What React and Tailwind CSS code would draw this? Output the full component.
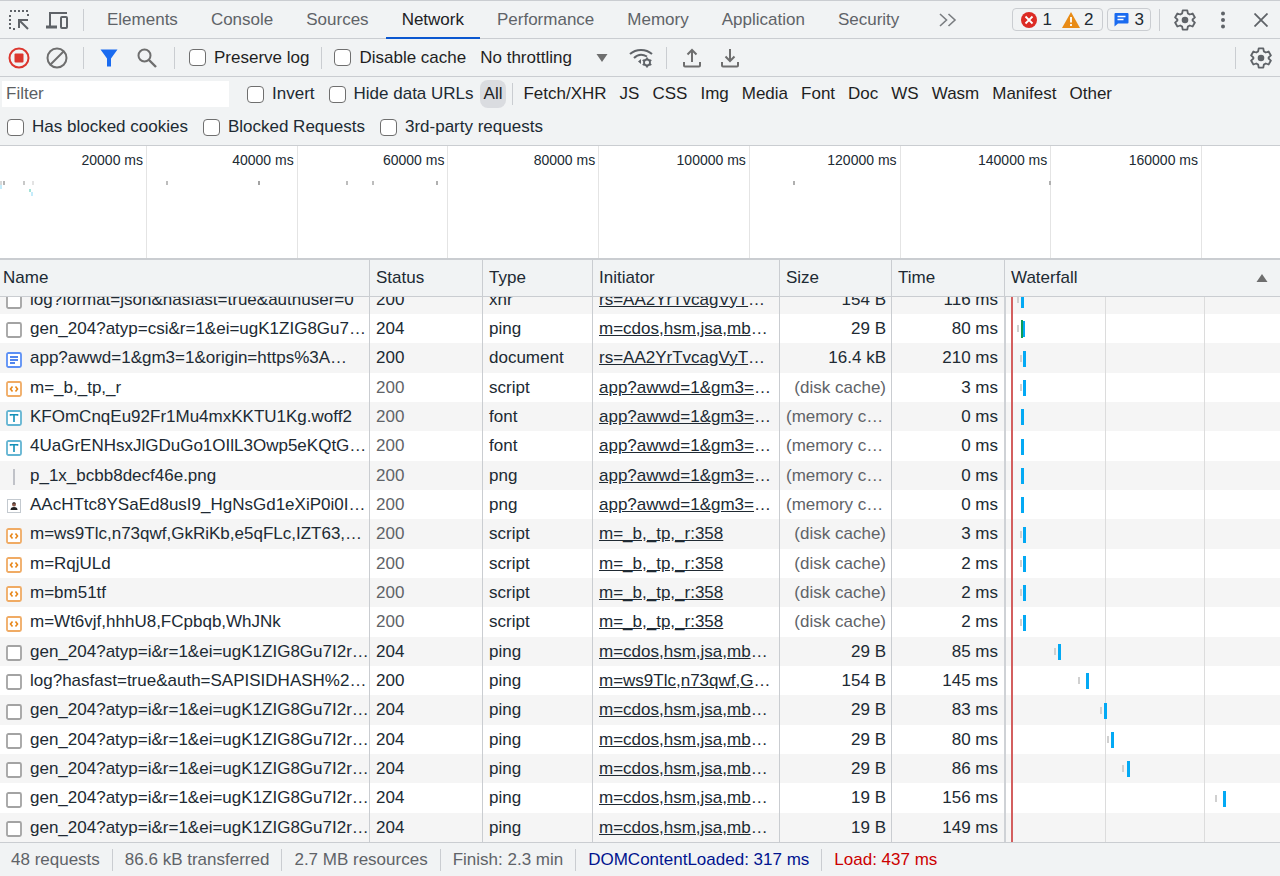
import React, { useState } from 'react';

const tabs = ['Elements', 'Console', 'Sources', 'Network', 'Performance', 'Memory', 'Application', 'Security'];

const categories = ['Fetch/XHR', 'JS', 'CSS', 'Img', 'Media', 'Font', 'Doc', 'WS', 'Wasm', 'Manifest', 'Other'];

const timeLabels = ['20000 ms', '40000 ms', '60000 ms', '80000 ms', '100000 ms', '120000 ms', '140000 ms', '160000 ms'];

const overviewTicks = [
  { x: 0, y: 35, h: 4, color: '#d9d9d9' },
  { x: 3, y: 35, h: 4, color: '#b5b5b5' },
  { x: 23, y: 35, h: 4, color: '#c9c9c9' },
  { x: 32, y: 35, h: 4, color: '#e3e3e3' },
  { x: 166, y: 35, h: 4, color: '#bdbdbd' },
  { x: 258, y: 35, h: 4, color: '#a3a3a3' },
  { x: 346, y: 35, h: 4, color: '#bdbdbd' },
  { x: 372, y: 35, h: 4, color: '#bdbdbd' },
  { x: 436, y: 35, h: 4, color: '#b0b0b0' },
  { x: 793, y: 35, h: 4, color: '#b0b0b0' },
  { x: 1049, y: 35, h: 4, color: '#b0b0b0' },
  { x: 0, y: 39, h: 4, color: '#c5ecfb' },
  { x: 29, y: 43, h: 3, color: '#a5e3d8' },
  { x: 31, y: 46, h: 4, color: '#c5ecfb' },
];

// wait / bar are x offsets inside the waterfall column
const requests = [
  { icon: 'other', name: 'log?format=json&hasfast=true&authuser=0', status: 200, type: 'xhr', initiator: 'rs=AA2YrTvcagVyT', cut: true, size: '154 B', time: '116 ms', wait: 13, bar: 17 },
  { icon: 'other', name: 'gen_204?atyp=csi&r=1&ei=ugK1ZIG8Gu7…', status: 204, type: 'ping', initiator: 'm=cdos,hsm,jsa,mb', cut: true, size: '29 B', time: '80 ms', wait: 13, bar: 18, green: true },
  { icon: 'doc', name: 'app?awwd=1&gm3=1&origin=https%3A…', status: 200, type: 'document', initiator: 'rs=AA2YrTvcagVyT', cut: true, size: '16.4 kB', time: '210 ms', wait: 16, bar: 19 },
  { icon: 'script', name: 'm=_b,_tp,_r', status: 200, type: 'script', initiator: 'app?awwd=1&gm3=', cut: true, size: '(disk cache)', time: '3 ms', cached: true, wait: 16, bar: 19 },
  { icon: 'font', name: 'KFOmCnqEu92Fr1Mu4mxKKTU1Kg.woff2', status: 200, type: 'font', initiator: 'app?awwd=1&gm3=', cut: true, size: '(memory c…', time: '0 ms', cached: true, bar: 17 },
  { icon: 'font', name: '4UaGrENHsxJlGDuGo1OIlL3Owp5eKQtG…', status: 200, type: 'font', initiator: 'app?awwd=1&gm3=', cut: true, size: '(memory c…', time: '0 ms', cached: true, bar: 17 },
  { icon: 'line', name: 'p_1x_bcbb8decf46e.png', status: 200, type: 'png', initiator: 'app?awwd=1&gm3=', cut: true, size: '(memory c…', time: '0 ms', cached: true, bar: 17 },
  { icon: 'avatar', name: 'AAcHTtc8YSaEd8usI9_HgNsGd1eXiP0i0I…', status: 200, type: 'png', initiator: 'app?awwd=1&gm3=', cut: true, size: '(memory c…', time: '0 ms', cached: true, bar: 17 },
  { icon: 'script', name: 'm=ws9Tlc,n73qwf,GkRiKb,e5qFLc,IZT63,…', status: 200, type: 'script', initiator: 'm=_b,_tp,_r:358', size: '(disk cache)', time: '3 ms', cached: true, wait: 16, bar: 19 },
  { icon: 'script', name: 'm=RqjULd', status: 200, type: 'script', initiator: 'm=_b,_tp,_r:358', size: '(disk cache)', time: '2 ms', cached: true, wait: 16, bar: 19 },
  { icon: 'script', name: 'm=bm51tf', status: 200, type: 'script', initiator: 'm=_b,_tp,_r:358', size: '(disk cache)', time: '2 ms', cached: true, wait: 16, bar: 19 },
  { icon: 'script', name: 'm=Wt6vjf,hhhU8,FCpbqb,WhJNk', status: 200, type: 'script', initiator: 'm=_b,_tp,_r:358', size: '(disk cache)', time: '2 ms', cached: true, wait: 16, bar: 19 },
  { icon: 'other', name: 'gen_204?atyp=i&r=1&ei=ugK1ZIG8Gu7I2r…', status: 204, type: 'ping', initiator: 'm=cdos,hsm,jsa,mb', cut: true, size: '29 B', time: '85 ms', wait: 50, bar: 54 },
  { icon: 'other', name: 'log?hasfast=true&auth=SAPISIDHASH%2…', status: 200, type: 'ping', initiator: 'm=ws9Tlc,n73qwf,G', cut: true, size: '154 B', time: '145 ms', wait: 74, bar: 82 },
  { icon: 'other', name: 'gen_204?atyp=i&r=1&ei=ugK1ZIG8Gu7I2r…', status: 204, type: 'ping', initiator: 'm=cdos,hsm,jsa,mb', cut: true, size: '29 B', time: '83 ms', wait: 96, bar: 100 },
  { icon: 'other', name: 'gen_204?atyp=i&r=1&ei=ugK1ZIG8Gu7I2r…', status: 204, type: 'ping', initiator: 'm=cdos,hsm,jsa,mb', cut: true, size: '29 B', time: '80 ms', wait: 103, bar: 107 },
  { icon: 'other', name: 'gen_204?atyp=i&r=1&ei=ugK1ZIG8Gu7I2r…', status: 204, type: 'ping', initiator: 'm=cdos,hsm,jsa,mb', cut: true, size: '29 B', time: '86 ms', wait: 118, bar: 123 },
  { icon: 'other', name: 'gen_204?atyp=i&r=1&ei=ugK1ZIG8Gu7I2r…', status: 204, type: 'ping', initiator: 'm=cdos,hsm,jsa,mb', cut: true, size: '19 B', time: '156 ms', wait: 211, bar: 219 },
  { icon: 'other', name: 'gen_204?atyp=i&r=1&ei=ugK1ZIG8Gu7I2r…', status: 204, type: 'ping', initiator: 'm=cdos,hsm,jsa,mb', cut: true, size: '19 B', time: '149 ms' },
];

const InspectIcon = () => (
  <svg className="size-[22px]" viewBox="0 0 22 22" fill="none" stroke="#5f6368" strokeWidth="2">
    <path d="M2 2h18" strokeDasharray="2 2" />
    <path d="M2 6v15" strokeDasharray="2 2" />
    <path d="M20 5v3M5 20h4" strokeDasharray="2 2" />
    <path d="M20 20l-8-8M11 19v-8h9" />
  </svg>
);

const DeviceIcon = () => (
  <svg className="h-5 w-6" viewBox="0 0 24 20" fill="none" stroke="#5f6368" strokeWidth="2">
    <path d="M5 16V3h17" />
    <path d="M1 17h11" strokeWidth="3" />
    <rect x="16" y="7" width="6" height="11" rx="1" />
  </svg>
);

const RecordIcon = () => (
  <svg className="size-[22px]" viewBox="0 0 22 22">
    <circle cx="11" cy="11" r="9.5" fill="none" stroke="#dc362e" strokeWidth="2" />
    <rect x="6.5" y="6.5" width="9" height="9" rx="1" fill="#dc362e" />
  </svg>
);

const ClearIcon = () => (
  <svg className="size-[22px]" viewBox="0 0 22 22" fill="none" stroke="#6e6e6e" strokeWidth="2">
    <circle cx="11" cy="11" r="9.5" />
    <path d="M4.5 17.5l13-13" />
  </svg>
);

const FunnelIcon = () => (
  <svg className="size-[18px]" viewBox="0 0 18 18">
    <path d="M0.5 0.5h17L11 9.5V17.5H7V9.5z" fill="#1a6bf0" />
  </svg>
);

const SearchIcon = () => (
  <svg className="size-5" viewBox="0 0 20 20" fill="none" stroke="#6e6e6e" strokeWidth="2">
    <circle cx="7.5" cy="7.5" r="6" />
    <path d="M12 12l7 7" strokeWidth="2.4" />
  </svg>
);

const ThrottleIcon = () => (
  <svg className="h-5 w-6" viewBox="0 0 24 20" fill="none" stroke="#5f6368" strokeWidth="2">
    <path d="M1 6C7 0.5 17 0.5 23 6" />
    <path d="M5 10c3.5-3.5 8.5-4 13-1.5" />
    <path d="M12 11v5l-3-2.5z" fill="#5f6368" stroke="none" />
    <circle cx="18" cy="14.5" r="3" strokeWidth="1.8" />
    <path d="M18 9.5v2M18 17.5v2M13.7 12l1.7 1M20.6 16l1.7 1M13.7 17l1.7-1M20.6 13l1.7-1" strokeWidth="1.8" />
  </svg>
);

const ImportIcon = () => (
  <svg className="h-5 w-[18px]" viewBox="0 0 18 20" fill="none" stroke="#6e6e6e" strokeWidth="2">
    <path d="M9 14V2M4.5 6.5L9 2l4.5 4.5" />
    <path d="M1 14v3.5q0 1 1 1h14q1 0 1-1V14" />
  </svg>
);

const ExportIcon = () => (
  <svg className="h-5 w-[18px]" viewBox="0 0 18 20" fill="none" stroke="#6e6e6e" strokeWidth="2">
    <path d="M9 1v12M4.5 8.5L9 13l4.5-4.5" />
    <path d="M1 14v3.5q0 1 1 1h14q1 0 1-1V14" />
  </svg>
);

const GearIcon = () => (
  <svg className="size-[22px]" viewBox="0 0 24 24" fill="none" stroke="#5f6368" strokeWidth="2">
    <path
      strokeLinejoin="round"
      d="M9.5 1.5h5l.6 3.3 2.1 1.200 3.100-1.100 2.500 4.300-2.500 2.200v1.200l2.500 2.200-2.500 4.300-3.100-1.100-2.100 1.200-.6 3.300h-5l-.6-3.300-2.100-1.200-3.100 1.100-2.500-4.300 2.500-2.200v-1.200L1.200 9.200l2.500-4.300 3.100 1.100 2.100-1.200z"
    />
    <circle cx="12" cy="12" r="3.6" fill="#5f6368" stroke="none" />
  </svg>
);

const FileIcon = ({ kind }) => {
  if (kind === 'line') {
    return (
      <svg className="size-4 shrink-0" viewBox="0 0 16 16">
        <path d="M8 0v16" stroke="#aeb0b8" strokeWidth="1.5" />
      </svg>
    );
  }
  if (kind === 'avatar') {
    return (
      <svg className="size-4 shrink-0" viewBox="0 0 16 16">
        <rect x="1.5" y="1.5" width="13" height="13" fill="#fff" stroke="#c3c9cf" />
        <circle cx="8" cy="6.5" r="2" fill="#8b5a4a" />
        <path d="M6 5.5q2-2.5 4 0z" fill="#222" />
        <path d="M4.5 12q0-3 3.5-3t3.5 3z" fill="#222" />
      </svg>
    );
  }
  if (kind === 'doc') {
    return (
      <svg className="size-4 shrink-0" viewBox="0 0 16 16" fill="none">
        <rect x="1" y="1" width="14" height="14" rx="1.5" fill="#fff" stroke="#5b8ff5" strokeWidth="1.8" />
        <path d="M4 5h8M4 8h8M4 11h5" stroke="#1a5fe8" strokeWidth="1.6" />
      </svg>
    );
  }
  if (kind === 'script') {
    return (
      <svg className="size-4 shrink-0" viewBox="0 0 16 16" fill="none">
        <rect x="1" y="1" width="14" height="14" rx="1.5" fill="#fff" stroke="#f0ab64" strokeWidth="1.8" />
        <path d="M6.500 5.5L4.5 8l2 2.5M9.5 5.5l2 2.5-2 2.5" stroke="#e8871a" strokeWidth="1.6" />
      </svg>
    );
  }
  if (kind === 'font') {
    return (
      <svg className="size-4 shrink-0" viewBox="0 0 16 16" fill="none">
        <rect x="1" y="1" width="14" height="14" rx="1.5" fill="#fff" stroke="#62b4d2" strokeWidth="1.8" />
        <path d="M4.5 5.8V4.7h7v1.1M8 4.7V12" stroke="#1290b8" strokeWidth="1.6" />
      </svg>
    );
  }
  return (
    <svg className="size-4 shrink-0" viewBox="0 0 16 16" fill="none">
      <rect x="1" y="1" width="14" height="14" rx="1.5" fill="#fff" stroke="#a3a3a3" strokeWidth="1.8" />
    </svg>
  );
};

const Divider = () => <div className="h-[22px] w-px shrink-0 bg-[#cacdd1]" />;

const IconButton = ({ label, children }) => (
  <button aria-label={label} className="flex h-9 w-[38px] shrink-0 items-center justify-center">
    {children}
  </button>
);

const CheckBox = ({ label }) => (
  <label className="flex items-center gap-2 whitespace-nowrap">
    <input
      type="checkbox"
      className="size-[17px] shrink-0 appearance-none rounded-sm border border-[#6f6f6f] bg-white checked:bg-blue-600"
    />
    {label}
  </label>
);

const Columns = () => (
  <colgroup>
    <col className="w-[370px]" />
    <col className="w-[113px]" />
    <col className="w-[110px]" />
    <col className="w-[187px]" />
    <col className="w-[112px]" />
    <col className="w-[113px]" />
    <col />
  </colgroup>
);

const Waterfall = () => (
  <svg className="absolute inset-y-0 right-0 left-[1004px] h-full" aria-hidden="true">
    <rect x="0" y="0" width="2" height="100%" fill="#cfd2d6" />
    <rect x="101" y="0" width="1" height="100%" fill="#dcdcdc" />
    <rect x="200" y="0" width="1" height="100%" fill="#dcdcdc" />
    {requests.map((r, i) => {
      const mid = Math.round(3 + (i * 88) / 3);
      return (
        <g key={i}>
          {r.wait && <rect x={r.wait} y={mid - 4} width="2" height="7" fill="#d0d0d0" />}
          {r.bar && <rect x={r.bar} y={mid - 8} width="3" height="16" fill="#03a9f4" />}
          {r.green && <rect x={r.bar - 1} y={mid - 9} width="2" height="18" fill="#0f9d58" />}
        </g>
      );
    })}
    <rect x="7" y="0" width="2" height="100%" fill="#d35f5f" />
  </svg>
);

const App = () => {
  const [activeTab, setActiveTab] = useState('Network');
  const [filter, setFilter] = useState('');

  return (
    <div className="flex h-screen flex-col overflow-hidden bg-[#f1f3f4] font-['Liberation_Sans',Arial,sans-serif] text-[17px] leading-5 text-[#202a33]">
      <header className="flex h-[39px] shrink-0 items-center border-t border-b border-[#cacdd1]">
        <IconButton label="Inspect element"><InspectIcon /></IconButton>
        <IconButton label="Toggle device toolbar"><DeviceIcon /></IconButton>
        <div className="px-[7px]"><Divider /></div>
        <nav className="flex h-full gap-px">
          {tabs.map((tab) => (
            <button
              key={tab}
              onClick={() => setActiveTab(tab)}
              className={
                tab === activeTab
                  ? 'h-[38px] border-b-2 border-[#0b57d0] px-4 pt-px text-[#202124]'
                  : 'h-[38px] border-b-2 border-transparent px-4 pt-px text-[#5f6368]'
              }
            >
              {tab}
            </button>
          ))}
        </nav>
        <button aria-label="More tabs" className="ml-6 flex items-center">
          <svg className="h-4 w-[18px]" viewBox="0 0 18 16" fill="none" stroke="#7a7d80" strokeWidth="1.6">
            <path d="M1 2l6.500 6L1 14M9.500 2l6.500 6-6.500 6" />
          </svg>
        </button>
        <div className="ml-auto flex items-center">
          <button className="flex h-[23px] items-center rounded-sm border border-[#cacdd1] px-2">
            <svg className="size-4" viewBox="0 0 16 16">
              <circle cx="8" cy="8" r="8" fill="#dc2b24" />
              <path d="M4.500 4.500l7 7M11.500 4.500l-7 7" stroke="#fff" strokeWidth="1.8" />
            </svg>
            <span className="mr-2.5 ml-1.5">1</span>
            <svg className="h-4 w-[18px]" viewBox="0 0 18 16">
              <path d="M9 0l9 16H0z" fill="#e88b16" />
              <path d="M9 5v5.500M9 12v2" stroke="#fff" strokeWidth="1.8" />
            </svg>
            <span className="ml-1">2</span>
          </button>
          <button className="ml-1 flex h-[23px] items-center gap-1.5 rounded-sm border border-[#cacdd1] px-1.5">
            <svg className="size-[15px]" viewBox="0 0 15 15">
              <path d="M1.500 1h12q1 0 1 1v8.500q0 1-1 1H4l-3.500 3V2q0-1 1-1z" fill="#1a6bf0" />
              <path d="M3.500 4.500h8M3.500 7.500h6" stroke="#fff" strokeWidth="1.3" />
            </svg>
            3
          </button>
          <div className="pr-1.5 pl-2"><Divider /></div>
          <IconButton label="Settings"><GearIcon /></IconButton>
          <IconButton label="Customize">
            <svg className="h-[18px] w-1" viewBox="0 0 4 18" fill="#5f6368">
              <circle cx="2" cy="2.5" r="2" />
              <circle cx="2" cy="9" r="2" />
              <circle cx="2" cy="15.5" r="2" />
            </svg>
          </IconButton>
          <IconButton label="Close">
            <svg className="size-3.5" viewBox="0 0 14 14" stroke="#5f6368" strokeWidth="1.8">
              <path d="M0.500 0.500l13 13M13.500 0.500l-13 13" />
            </svg>
          </IconButton>
        </div>
      </header>

      <div className="flex h-[38px] shrink-0 items-center border-b border-[#cacdd1] text-[#1f1f1f]">
        <IconButton label="Stop recording"><RecordIcon /></IconButton>
        <IconButton label="Clear"><ClearIcon /></IconButton>
        <div className="pr-1.5 pl-[7px]"><Divider /></div>
        <IconButton label="Filter"><FunnelIcon /></IconButton>
        <IconButton label="Search"><SearchIcon /></IconButton>
        <div className="pr-3.5 pl-2"><Divider /></div>
        <CheckBox label="Preserve log" />
        <div className="px-3"><Divider /></div>
        <CheckBox label="Disable cache" />
        <div className="relative ml-3.5 flex items-center">
          <select aria-label="Throttling" className="w-32 appearance-none bg-transparent">
            <option>No throttling</option>
          </select>
          <svg className="pointer-events-none absolute right-0 h-2 w-3" viewBox="0 0 12 8">
            <path d="M0.500 0h11L6 8z" fill="#6e6e6e" />
          </svg>
        </div>
        <div className="ml-3.5"><IconButton label="Network conditions"><ThrottleIcon /></IconButton></div>
        <div className="pr-1.5 pl-1.5"><Divider /></div>
        <IconButton label="Import HAR file"><ImportIcon /></IconButton>
        <IconButton label="Export HAR file"><ExportIcon /></IconButton>
        <div className="ml-auto flex items-center">
          <div className="pr-1.5"><Divider /></div>
          <IconButton label="Network settings"><GearIcon /></IconButton>
        </div>
      </div>

      <div className="shrink-0 border-b border-[#cacdd1] pb-0.5">
        <div className="flex h-[34px] items-center">
          <input
            type="text"
            aria-label="Filter"
            placeholder="Filter"
            value={filter}
            onChange={(e) => setFilter(e.target.value)}
            className="mr-[18px] ml-0.5 h-[26px] w-[227px] bg-white px-1 outline-none placeholder:text-[#5c5f63]"
          />
          <CheckBox label="Invert" />
          <div className="mr-1.5 ml-3.5"><CheckBox label="Hide data URLs" /></div>
          <button className="h-7 rounded-lg bg-[#dadce0] px-1 text-[#1f1f1f]">All</button>
          <div className="pr-1 pl-1.5"><Divider /></div>
          <div className="flex gap-px">
            {categories.map((category) => (
              <button key={category} className="px-1.5 text-[#1f1f1f]">{category}</button>
            ))}
          </div>
        </div>
        <div className="flex h-8 items-center gap-[15px] pl-[7px]">
          <CheckBox label="Has blocked cookies" />
          <CheckBox label="Blocked Requests" />
          <CheckBox label="3rd-party requests" />
        </div>
      </div>

      <div className="relative h-28 shrink-0 bg-white">
        <div className="grid h-full grid-cols-[147px_repeat(7,minmax(0,1fr))_78px] text-right text-sm">
          {timeLabels.map((label) => (
            <div key={label} className="border-r border-[#e4e4e4] pt-1 pr-[3px]">{label}</div>
          ))}
        </div>
        <svg className="absolute inset-0 size-full" aria-hidden="true">
          {overviewTicks.map((t, i) => (
            <rect key={i} x={t.x} y={t.y} width="2" height={t.h} fill={t.color} />
          ))}
        </svg>
      </div>

      <table className="w-full shrink-0 table-fixed border-separate border-spacing-0 border-t-2 border-b border-[#cacdd1]">
        <Columns />
        <thead>
          <tr className="h-9 text-left">
            <th className="border-r border-[#cacdd1] p-0 pl-[3px] font-normal">Name</th>
            <th className="border-r border-[#cacdd1] p-0 pl-1.5 font-normal">Status</th>
            <th className="border-r border-[#cacdd1] p-0 pl-1.5 font-normal">Type</th>
            <th className="border-r border-[#cacdd1] p-0 pl-1.5 font-normal">Initiator</th>
            <th className="border-r border-[#cacdd1] p-0 pl-1.5 font-normal">Size</th>
            <th className="border-r border-[#cacdd1] p-0 pl-1.5 font-normal">Time</th>
            <th className="p-0 pr-3 pl-1.5 font-normal">
              <div className="flex items-center justify-between">
                Waterfall
                <svg className="h-2 w-3" viewBox="0 0 12 8">
                  <path d="M0.500 8h11L6 0z" fill="#6e6e6e" />
                </svg>
              </div>
            </th>
          </tr>
        </thead>
      </table>

      <div className="relative flex min-h-0 flex-1 flex-col justify-end overflow-hidden bg-white">
        <table className="w-full shrink-0 table-fixed border-separate border-spacing-0 whitespace-nowrap">
          <Columns />
          <tbody>
            {requests.map((r, i) => (
              <tr key={i} className="h-[29px] odd:bg-[#f5f5f5] nth-[3n]:h-[30px]">
                <td className="overflow-hidden border-r border-[#cacdd1] p-0 pl-1.5">
                  <div className="flex items-center gap-2">
                    <div className="pt-[3px]"><FileIcon kind={r.icon} /></div>
                    {r.name}
                  </div>
                </td>
                <td className={r.cached ? 'border-r border-[#cacdd1] p-0 pl-1.5 text-[#5f6368]' : 'border-r border-[#cacdd1] p-0 pl-1.5'}>{r.status}</td>
                <td className="border-r border-[#cacdd1] p-0 pl-1.5">{r.type}</td>
                <td className="overflow-hidden border-r border-[#cacdd1] p-0 pl-1.5">
                  <a href="#" className="underline">{r.initiator}</a>{r.cut && '…'}
                </td>
                <td className={r.cached ? 'border-r border-[#cacdd1] p-0 pr-[5px] pl-1.5 text-right text-[#5f6368]' : 'border-r border-[#cacdd1] p-0 pr-[5px] text-right'}>
                  {r.size.endsWith('…') ? <div className="text-left">{r.size}</div> : r.size}
                </td>
                <td className="border-r border-[#cacdd1] p-0 pr-1.5 text-right">{r.time}</td>
                <td className="p-0" />
              </tr>
            ))}
          </tbody>
        </table>
        <Waterfall />
      </div>

      <footer className="flex h-[34px] shrink-0 items-center border-t border-[#cacdd1] pt-px text-[#5f6368]">
        <span className="pr-3 pl-[11px]">48 requests</span>
        <Divider />
        <span className="px-3">86.6 kB transferred</span>
        <Divider />
        <span className="px-3">2.7 MB resources</span>
        <Divider />
        <span className="px-3">Finish: 2.3 min</span>
        <Divider />
        <span className="px-3 text-[#00148f]">DOMContentLoaded: 317 ms</span>
        <Divider />
        <span className="px-3 text-[#c00]">Load: 437 ms</span>
      </footer>
    </div>
  );
};

export default App;
